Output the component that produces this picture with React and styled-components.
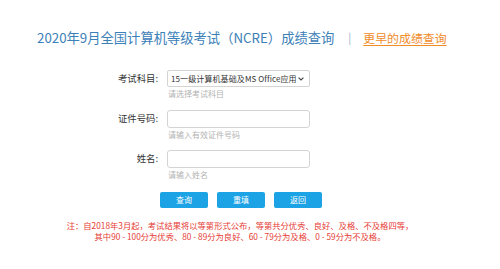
import React from "react";
import styled, { createGlobalStyle } from "styled-components";

const Global = createGlobalStyle`
  html, body { margin: 0; padding: 0; background: #fff; }
  body { font-family: "Noto Sans CJK SC", "Liberation Sans", sans-serif; }
`;

const Page = styled.div`
  width: 500px;
  height: 269px;
  background: #fff;
  display: flex;
  flex-direction: column;
`;

const Header = styled.div`
  display: flex;
  align-items: center;
  padding: 28px 0 0 37px;
  height: 18px;
`;

const Title = styled.h1`
  margin: 0;
  font-size: 13.3px;
  font-weight: 400;
  color: #3c80b8;
  white-space: nowrap;
`;

const Sep = styled.span`
  margin: 0 12px 0 14px;
  color: #8fb1cf;
  font-size: 11px;
`;

const EarlyLink = styled.a`
  font-size: 11.9px;
  color: #f08c2a;
  text-decoration: underline;
  text-underline-offset: 2px;
  white-space: nowrap;
`;

const Form = styled.div`
  display: grid;
  grid-template-columns: 158px 143px;
  column-gap: 9px;
  margin-top: 24px;
`;

const Label = styled.label`
  text-align: right;
  font-size: 9.4px;
  color: #333;
  height: 17px;
  line-height: 17px;
  white-space: nowrap;
`;

const Field = styled.div`
  display: flex;
  flex-direction: column;
  height: 40px;
`;

const SelectBox = styled.div`
  box-sizing: border-box;
  height: 17px;
  display: flex;
  align-items: center;
  justify-content: space-between;
  border: 1px solid #d4d4d4;
  border-radius: 2px;
  background: #fff;
  padding: 0 5px 0 3px;
  font-size: 8px;
  letter-spacing: 0.1px;
  color: #333;
  white-space: nowrap;
`;

const Chevron = styled.svg`
  width: 6px;
  height: 4px;
  flex: none;
`;

const Input = styled.input`
  box-sizing: border-box;
  width: 100%;
  height: 18px;
  border: 1px solid #d4d4d4;
  border-radius: 3px;
  background: #fff;
  outline: none;
  padding: 0 4px;
  margin: 0;
`;

const Hint = styled.span`
  margin-top: 2px;
  font-size: 8px;
  line-height: 10px;
  color: #b3b3b3;
  padding-left: 1px;
  white-space: nowrap;
`;

const Buttons = styled.div`
  display: flex;
  gap: 9px;
  padding-left: 160px;
  margin-top: 2px;
`;

const Btn = styled.button`
  width: 48px;
  height: 16px;
  border: none;
  border-radius: 2px;
  background: #1ca3e6;
  color: #fff;
  font-family: "Noto Sans CJK SC", "Liberation Sans", sans-serif;
  font-size: 8px;
  padding: 0;
  line-height: 16px;
`;

const Note = styled.div`
  margin: 12px 0 0 0;
  width: 480px;
  text-align: center;
  color: #e63c36;
  font-size: 8.3px;
`;

const NoteLine = styled.p`
  margin: 0;
  line-height: 11px;
  white-space: nowrap;
`;

export default function App() {
  return (
    <Page>
      <Global />
      <Header>
        <Title>2020年9月全国计算机等级考试（NCRE）成绩查询</Title>
        <Sep>|</Sep>
        <EarlyLink>更早的成绩查询</EarlyLink>
      </Header>
      <Form>
        <Label>考试科目:</Label>
        <Field>
          <SelectBox role="combobox">
            <span>15一级计算机基础及MS Office应用</span>
            <Chevron viewBox="0 0 6 4">
              <path d="M0.6 0.6 L3 3 L5.4 0.6" fill="none" stroke="#444" strokeWidth="1.1" />
            </Chevron>
          </SelectBox>
          <Hint>请选择考试科目</Hint>
        </Field>
        <Label>证件号码:</Label>
        <Field>
          <Input />
          <Hint>请输入有效证件号码</Hint>
        </Field>
        <Label>姓名:</Label>
        <Field>
          <Input />
          <Hint>请输入姓名</Hint>
        </Field>
      </Form>
      <Buttons>
        <Btn>查询</Btn>
        <Btn>重填</Btn>
        <Btn>返回</Btn>
      </Buttons>
      <Note>
        <NoteLine>注：自2018年3月起，考试结果将以等第形式公布，等第共分优秀、良好、及格、不及格四等，</NoteLine>
        <NoteLine>其中90 - 100分为优秀、80 - 89分为良好、60 - 79分为及格、0 - 59分为不及格。</NoteLine>
      </Note>
    </Page>
  );
}
